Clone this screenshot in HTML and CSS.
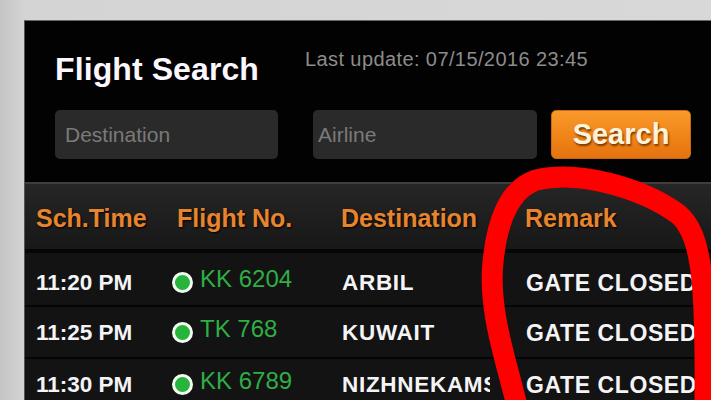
FILE: index.html
```html
<!DOCTYPE html>
<html>
<head>
<meta charset="utf-8">
<link rel="stylesheet" href="styles.css">
</head>
<body>
<div class="page">
  <div class="panel">
    <div class="search">
      <div class="title-row">
        <h1 class="title">Flight Search</h1>
        <span class="updated">Last update: 07/15/2016 23:45</span>
      </div>
      <div class="form-row">
        <div class="field field-dest">Destination</div>
        <div class="field field-air">Airline</div>
        <div class="btn">Search</div>
      </div>
    </div>
    <div class="table">
      <div class="thead">
        <div class="th">Sch.Time</div>
        <div class="th">Flight No.</div>
        <div class="th">Destination</div>
        <div class="th">Remark</div>
      </div>
      <div class="row row-first">
        <div class="td time">11:20 PM</div>
        <div class="td flight"><span class="dot"></span><span class="fno">KK 6204</span></div>
        <div class="td dest"><span class="clip">ARBIL</span></div>
        <div class="td remark">GATE CLOSED</div>
      </div>
      <div class="row">
        <div class="td time">11:25 PM</div>
        <div class="td flight"><span class="dot"></span><span class="fno">TK 768</span></div>
        <div class="td dest"><span class="clip">KUWAIT</span></div>
        <div class="td remark">GATE CLOSED</div>
      </div>
      <div class="row">
        <div class="td time">11:30 PM</div>
        <div class="td flight"><span class="dot"></span><span class="fno">KK 6789</span></div>
        <div class="td dest"><span class="clip">NIZHNEKAMSK</span></div>
        <div class="td remark">GATE CLOSED</div>
      </div>
    </div>
  </div>
  <svg class="scribble" width="711" height="400" viewBox="0 0 711 400">
    <path d="M 516 402 C 506 360, 488 310, 493 262 C 497 222, 508 190, 536 180 C 580 170, 642 188, 678 214 C 702 234, 706 280, 705 402" fill="none" stroke="#ff0000" stroke-width="21" stroke-linecap="round" stroke-linejoin="round"/>
  </svg>
</div>
</body>
</html>
```
FILE: styles.css
```css
* { box-sizing: border-box; }
html, body { margin: 0; padding: 0; }
body {
  width: 711px;
  height: 400px;
  overflow: hidden;
  background: #cfcfcf;
  font-family: "Liberation Sans", Arial, sans-serif;
}
.page {
  position: relative;
  width: 711px;
  height: 400px;
  padding: 20px 0 0 24px;
  background: linear-gradient(90deg, #c4c4c4 0px, #d4d4d4 24px, #d8d8d8 100%);
}
.panel {
  background: #020202;
  height: 380px;
  border-left: 1px solid #555;
  border-top: 1px solid #666;
  overflow: hidden;
}
.search {
  height: 161px;
  padding: 0 0 0 30px;
}
.title-row {
  display: flex;
  align-items: flex-start;
  height: 89px;
}
.title {
  margin: 28px 0 0 0;
  font-size: 32px;
  font-weight: bold;
  color: #fbf7ff;
  line-height: 40px;
  letter-spacing: 0.1px;
}
.updated {
  margin: 27px 0 0 46px;
  font-size: 20px;
  color: #8c8c8c;
  line-height: 22px;
  letter-spacing: 0.4px;
}
.form-row {
  display: flex;
  align-items: center;
  height: 49px;
}
.field {
  height: 49px;
  background: #2a2a2a;
  border-radius: 5px;
  color: #7a7a7a;
  font-size: 21px;
  line-height: 49px;
  padding-left: 10px;
}
.field-dest { width: 223px; }
.field-air { width: 224px; margin-left: 35px; padding-left: 5px; }
.btn {
  width: 140px;
  height: 49px;
  margin-left: 14px;
  border-radius: 5px;
  background: linear-gradient(180deg, #f99a2a 0%, #f08418 55%, #e57310 100%);
  color: #fff3dc;
  font-size: 29px;
  font-weight: bold;
  line-height: 47px;
  text-align: center;
  text-shadow: 1px 2px 2px #7a3a00;
  border: 1px solid #c96a10;
}
.table {
  border-top: 2px solid #3e3e3e;
}
.thead, .row {
  display: grid;
  grid-template-columns: 141px 164px 184px 1fr;
}
.thead {
  height: 69px;
  background: linear-gradient(180deg, #262626 0%, #1d1d1d 60%, #181818 100%);
  border-bottom: 4px solid #060606;
  align-items: center;
}
.th {
  padding-left: 11px;
  padding-top: 3px;
  color: #e8842e;
  font-size: 25px;
  font-weight: bold;
  text-shadow: 1px 1px 2px #000;
  white-space: nowrap;
}
.row {
  height: 52px;
  background: #131313;
  border-bottom: 2px solid #050505;
  align-items: center;
  color: #f4f4f6;
  font-size: 22.5px;
  font-weight: bold;
  white-space: nowrap;
}
.row-first {
  height: 54px;
  padding-top: 6px;
}
.td { padding-left: 11px; }
.time { padding-top: 2px; }
.flight {
  display: flex;
  align-items: center;
  padding-left: 6px;
}
.dot {
  width: 21px;
  height: 21px;
  border-radius: 50%;
  background: #27b43c;
  border: 3px solid #f2fff2;
  margin-right: 7px;
}
.fno {
  color: #2fae45;
  font-weight: normal;
  font-size: 24px;
  position: relative;
  top: -3px;
}
.dest { padding-left: 12px; padding-top: 2px; }
.clip {
  display: block;
  width: 148px;
  overflow: hidden;
  letter-spacing: 0.7px;
}
.remark {
  padding-left: 12px;
  padding-top: 2px;
  font-size: 23px;
  letter-spacing: 0.6px;
}
.scribble {
  position: absolute;
  left: 0;
  top: 0;
}
```
